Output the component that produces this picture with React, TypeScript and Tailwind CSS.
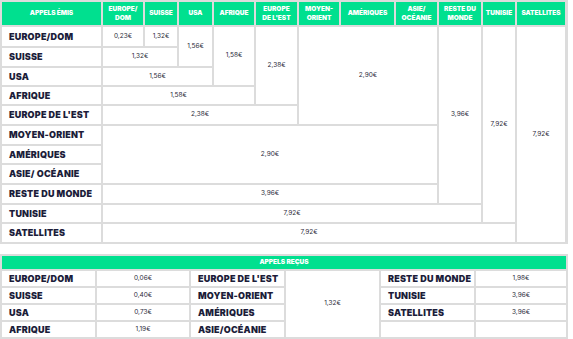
import React from 'react';

const label = "flex items-center bg-white pl-[7px] font-['Inter',sans-serif] text-[9px] tracking-[0.2px] font-black text-[#1c1d3a] whitespace-nowrap";
const value = "flex items-center justify-center bg-white font-['Inter',sans-serif] text-[6.5px] text-[#2b2b3a]";
const head = "flex items-center justify-center bg-[#00e08f] text-center font-['Inter',sans-serif] text-[6.5px] leading-[9px] font-black text-white";

/**
 * Tableau des appels émis (matrice en escalier)
 */
const AppelsEmis: React.FC = () => {
  return (
    <div className="w-[568px] bg-[#dcdcdc] p-[2px]">
      <div className="grid gap-[2px] grid-cols-[99px_40px_32px_33px_40px_41px_40px_53px_41px_42px_32px_48px] grid-rows-[23px_19px_18px_17px_17px_18px_18px_17px_18px_18px_17px_18px]">
        {/* en-tête */}
        <div className={head}>APPELS ÉMIS</div>
        <div className={head}>EUROPE/<br />DOM</div>
        <div className={head}>SUISSE</div>
        <div className={head}>USA</div>
        <div className={head}>AFRIQUE</div>
        <div className={head}>EUROPE<br />DE L'EST</div>
        <div className={head}>MOYEN-<br />ORIENT</div>
        <div className={head}>AMÉRIQUES</div>
        <div className={head}>ASIE/<br />OCÉANIE</div>
        <div className={head}>RESTE DU<br />MONDE</div>
        <div className={head}>TUNISIE</div>
        <div className={head}>SATELLITES</div>

        {/* libellés */}
        <div className={`${label} col-start-1 row-start-2`}>EUROPE/DOM</div>
        <div className={`${label} col-start-1 row-start-3`}>SUISSE</div>
        <div className={`${label} col-start-1 row-start-4`}>USA</div>
        <div className={`${label} col-start-1 row-start-5`}>AFRIQUE</div>
        <div className={`${label} col-start-1 row-start-6`}>EUROPE DE L'EST</div>
        <div className={`${label} col-start-1 row-start-7`}>MOYEN-ORIENT</div>
        <div className={`${label} col-start-1 row-start-8`}>AMÉRIQUES</div>
        <div className={`${label} col-start-1 row-start-9`}>ASIE/ OCÉANIE</div>
        <div className={`${label} col-start-1 row-start-10`}>RESTE DU MONDE</div>
        <div className={`${label} col-start-1 row-start-11`}>TUNISIE</div>
        <div className={`${label} col-start-1 row-start-12`}>SATELLITES</div>

        {/* colonnes */}
        <div className={`${value} col-start-2 row-start-2`}>0,23€</div>
        <div className={`${value} col-start-3 row-start-2`}>1,32€</div>
        <div className={`${value} col-start-4 row-start-2 row-span-2`}>1,56€</div>
        <div className={`${value} col-start-5 row-start-2 row-span-3`}>1,58€</div>
        <div className={`${value} col-start-6 row-start-2 row-span-4`}>2,38€</div>
        <div className={`${value} col-start-7 col-span-3 row-start-2 row-span-5`}>2,90€</div>
        <div className={`${value} col-start-10 row-start-2 row-span-9`}>3,96€</div>
        <div className={`${value} col-start-11 row-start-2 row-span-10`}>7,92€</div>
        <div className={`${value} col-start-12 row-start-2 row-span-11`}>7,92€</div>

        {/* lignes */}
        <div className={`${value} col-start-2 col-span-2 row-start-3`}>1,32€</div>
        <div className={`${value} col-start-2 col-span-3 row-start-4`}>1,56€</div>
        <div className={`${value} col-start-2 col-span-4 row-start-5`}>1,58€</div>
        <div className={`${value} col-start-2 col-span-5 row-start-6`}>2,38€</div>
        <div className={`${value} col-start-2 col-span-8 row-start-7 row-span-3`}>2,90€</div>
        <div className={`${value} col-start-2 col-span-8 row-start-10`}>3,96€</div>
        <div className={`${value} col-start-2 col-span-9 row-start-11`}>7,92€</div>
        <div className={`${value} col-start-2 col-span-10 row-start-12`}>7,92€</div>
      </div>
    </div>
  );
};

/**
 * Tableau des appels reçus
 */
const AppelsRecus: React.FC = () => {
  return (
    <div className="mt-[10px] w-[568px] bg-[#dcdcdc] p-[2px]">
      <div className="grid gap-[2px] grid-cols-[93px_92px_93px_93px_93px_90px] grid-rows-[13px_15px_15px_15px_15px]">
        <div className={`${head} col-span-6`}>APPELS REÇUS</div>

        <div className={`${label} col-start-1 row-start-2`}>EUROPE/DOM</div>
        <div className={`${value} col-start-2 row-start-2`}>0,06€</div>
        <div className={`${label} col-start-3 row-start-2`}>EUROPE DE L'EST</div>
        <div className={`${value} col-start-4 row-start-2 row-span-4`}>1,32€</div>
        <div className={`${label} col-start-5 row-start-2`}>RESTE DU MONDE</div>
        <div className={`${value} col-start-6 row-start-2`}>1,98€</div>

        <div className={`${label} col-start-1 row-start-3`}>SUISSE</div>
        <div className={`${value} col-start-2 row-start-3`}>0,40€</div>
        <div className={`${label} col-start-3 row-start-3`}>MOYEN-ORIENT</div>
        <div className={`${label} col-start-5 row-start-3`}>TUNISIE</div>
        <div className={`${value} col-start-6 row-start-3`}>3,96€</div>

        <div className={`${label} col-start-1 row-start-4`}>USA</div>
        <div className={`${value} col-start-2 row-start-4`}>0,73€</div>
        <div className={`${label} col-start-3 row-start-4`}>AMÉRIQUES</div>
        <div className={`${label} col-start-5 row-start-4`}>SATELLITES</div>
        <div className={`${value} col-start-6 row-start-4`}>3,96€</div>

        <div className={`${label} col-start-1 row-start-5`}>AFRIQUE</div>
        <div className={`${value} col-start-2 row-start-5`}>1,19€</div>
        <div className={`${label} col-start-3 row-start-5`}>ASIE/OCÉANIE</div>
        <div className={`${label} col-start-5 row-start-5`}></div>
        <div className={`${value} col-start-6 row-start-5`}></div>
      </div>
    </div>
  );
};

export default function App() {
  return (
    <div className="w-[573px] h-[339px] bg-white">
      <AppelsEmis />
      <AppelsRecus />
    </div>
  );
}
